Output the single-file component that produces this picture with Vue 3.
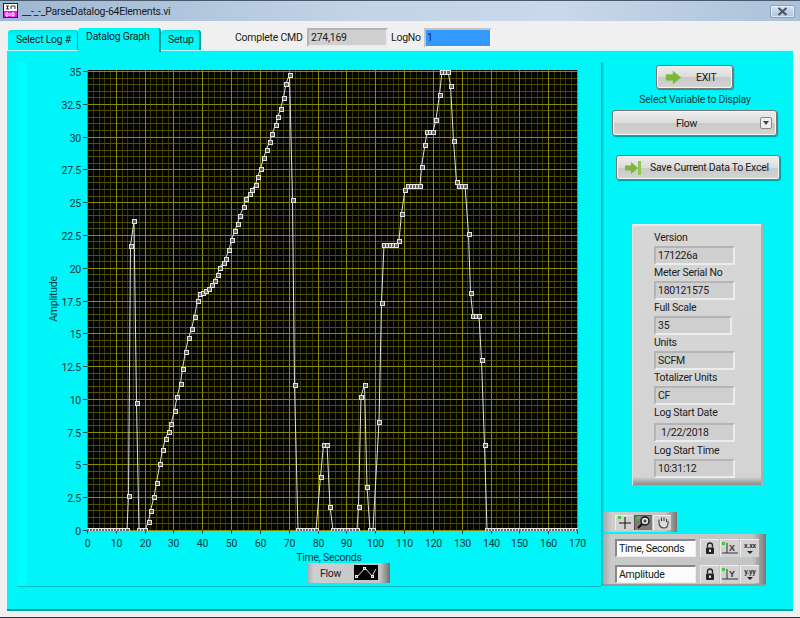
<script setup>
const plot = { l: 87, r: 578, t: 70, b: 530 }
const sx = (plot.r - plot.l - 1) / 170
const sy = (plot.b - plot.t - 1) / 35
const xPos = v => Math.round(plot.l + v * sx) + 0.5
const yPos = v => Math.round(plot.b - v * sy) + 0.5
const range = (n, f) => Array.from({ length: n }, (_, i) => f(i))

const xMinor = range(86, i => i * 2).filter(v => v % 10 !== 0)
const yMinor = range(71, i => i * 0.5).filter(v => v % 2.5 !== 0)
const xMajor = range(18, i => i * 10)
const yMajor = range(15, i => i * 2.5)

const flat = (a, b, y, s = 3) => {
  const out = []
  for (let x = a; x <= b; x += s) out.push([x, y])
  return out
}
const points = [
  ...flat(88, 127, 530),
  [128.5, 496], [130.5, 245.5], [134, 221], [136.5, 403],
  ...flat(139, 146, 530),
  [148.5, 521.5], [150.5, 510.5], [154, 497], [156.5, 482.5], [160, 463.5], [162.5, 450],
  [165.5, 438.5], [168.5, 431.5], [171, 424], [174.5, 410.5], [177, 397], [180.5, 383.5],
  [182.5, 368.5], [185.5, 351.5], [188.5, 338], [191.5, 329], [194.5, 316.5], [197.5, 300.5],
  [200, 294], [203, 293], [205.5, 291], [208.5, 288.5], [211.5, 285], [214.5, 281],
  [217.5, 274.5], [219.5, 267.5], [223.5, 262.5], [225.5, 258.5], [229, 250], [231.5, 239.5],
  [235, 230.5], [237.5, 223.5], [240, 215.5], [243.5, 207], [246, 199], [249.5, 194],
  [252, 189.5], [255.5, 184.5], [257.5, 177], [260.5, 169], [263.5, 158], [266.5, 149.5],
  [269.5, 141.5], [272, 134], [275.5, 125], [278, 116.5], [280.5, 108.5], [283.5, 97.5],
  [286, 83.5], [289.5, 74.5], [292.5, 199.5], [294.5, 384.5],
  ...flat(298, 318, 530),
  [320.5, 476.5], [323.5, 444.5], [327, 444.5], [330, 506.5],
  ...flat(333, 357, 530),
  [358.5, 506.5], [361, 396.5], [364.5, 384.5], [367, 486.5],
  ...flat(370, 375, 530),
  [379, 422], [381.5, 303],
  ...flat(384, 397, 245),
  [399, 240.5], [401.5, 213.5], [405, 189.5],
  ...flat(408, 420, 186),
  [421.5, 166.5], [425, 144.5],
  ...flat(427, 434, 132),
  [436, 119.5], [439.5, 94.5],
  ...flat(442, 448, 71.5),
  [450.5, 85.5], [453.5, 140.5], [456.5, 182],
  ...flat(459, 465, 185.5),
  [468.5, 233.5], [470.5, 293],
  ...flat(473, 479, 316),
  [481.5, 360], [484.5, 445],
  ...flat(487, 577, 530)
]
const line = points.map(p => p.join(',')).join(' ')
const markers = points.map(p => [Math.round(p[0] - 2) + 0.5, Math.round(p[1] - 2) + 0.5])

const fields = [
  { label: 'Version', value: '171226a' },
  { label: 'Meter Serial No', value: '180121575' },
  { label: 'Full Scale', value: '35', short: true },
  { label: 'Units', value: 'SCFM' },
  { label: 'Totalizer Units', value: 'CF' },
  { label: 'Log Start Date', value: '1/22/2018', indent: true, tall: true },
  { label: 'Log Start Time', value: '10:31:12' }
]
const scales = [
  { name: 'Time, Seconds', axis: 'X', fmt: 'x.xx' },
  { name: 'Amplitude', axis: 'Y', fmt: 'y.yy' }
]
</script>

<template>
  <div class="window">
    <header class="titlebar">
      <svg class="vi-icon" width="16" height="16" viewBox="0 0 16 16">
        <rect x="0.5" y="0.5" width="14" height="14" fill="#fff" stroke="#222" />
        <rect x="1" y="8" width="13" height="6" fill="#e81ee8" />
        <path d="M3 3h3M4.500 3v3M8 3h4M8 3v3M12 3v3M3 6h3" stroke="#333" fill="none" />
        <path d="M3 10h2v3H3zM7 10v3M9 10h2v3H9z" stroke="#fff" fill="none" />
      </svg>
      <span class="title">__-_-_ParseDatalog-64Elements.vi</span>
      <div class="close">
        <svg width="11" height="9" viewBox="0 0 11 9">
          <path d="M1.500 1l8 7M9.500 1l-8 7" stroke="#4a5564" stroke-width="2.200" fill="none" />
        </svg>
      </div>
    </header>

    <div class="toolbar">
      <nav class="tabs">
        <div class="tab">Select Log #</div>
        <div class="tab active">Datalog Graph</div>
        <div class="tab last">Setup</div>
      </nav>
      <div class="readouts">
        <span class="cmd-label">Complete CMD</span>
        <div class="inset cmd">274,169</div>
        <span class="log-label">LogNo</span>
        <div class="inset logno">1</div>
      </div>
    </div>

    <main class="panel">
      <section class="graph-pane">
        <svg class="graph" width="584" height="524" viewBox="17 62 584 524">
          <defs>
            <clipPath id="plotClip">
              <rect :x="plot.l" :y="plot.t" :width="plot.r - plot.l" :height="plot.b - plot.t + 1" />
            </clipPath>
            <linearGradient id="legendBg" x1="0" x2="1" y1="0" y2="0">
              <stop offset="0" stop-color="#a8a8a8" />
              <stop offset="0.08" stop-color="#cfcfcf" />
              <stop offset="0.88" stop-color="#c4c4c4" />
              <stop offset="1" stop-color="#6e6e6e" />
            </linearGradient>
          </defs>
          <g shape-rendering="crispEdges">
            <rect :x="plot.l" :y="plot.t" :width="plot.r - plot.l" :height="plot.b - plot.t" fill="#050500" />
            <line v-for="v in xMinor" :key="'xm' + v" :x1="xPos(v)" :x2="xPos(v)" :y1="plot.t" :y2="plot.b" class="minor" />
            <line v-for="v in yMinor" :key="'ym' + v" :y1="yPos(v)" :y2="yPos(v)" :x1="plot.l" :x2="plot.r" class="minor horizontal" />
            <line v-for="v in xMajor" :key="'xg' + v" :x1="xPos(v)" :x2="xPos(v)" :y1="plot.t" :y2="plot.b" class="major" />
            <line v-for="v in yMajor" :key="'yg' + v" :y1="yPos(v)" :y2="yPos(v)" :x1="plot.l" :x2="plot.r" class="major" />
            <line v-for="v in yMajor" :key="'yt' + v" :y1="yPos(v)" :y2="yPos(v)" x1="83" :x2="plot.l" class="tick" />
            <line v-for="v in xMajor" :key="'xt' + v" :x1="xPos(v)" :x2="xPos(v)" :y1="plot.b" :y2="plot.b + 4" class="tick" />
          </g>
          <g clip-path="url(#plotClip)">
            <polyline :points="line" class="trace" />
            <g shape-rendering="crispEdges">
              <rect v-for="(m, i) in markers" :key="i" :x="m[0]" :y="m[1]" width="4" height="4" class="marker" />
            </g>
          </g>
          <text v-for="v in yMajor" :key="'yl' + v" x="81" :y="yPos(v) + 4" text-anchor="end" class="axis">{{ v }}</text>
          <text v-for="v in xMajor" :key="'xl' + v" :x="xPos(v)" y="547" text-anchor="middle" class="axis">{{ v }}</text>
          <text x="329" y="561" text-anchor="middle" class="axis">Time, Seconds</text>
          <text transform="translate(57 299) rotate(-90)" text-anchor="middle" class="axis">Amplitude</text>

          <rect x="307" y="563" width="83" height="20" fill="url(#legendBg)" />
          <text x="320" y="577" class="axis dark">Flow</text>
          <rect x="354" y="565" width="24" height="15" fill="#000" />
          <polyline points="357,577 365,568 372,576 376,569" fill="none" stroke="#ddd" />
          <g fill="#555" stroke="#eee" shape-rendering="crispEdges">
            <rect x="355.500" y="575.500" width="2" height="2" />
            <rect x="363.500" y="567.500" width="2" height="2" />
            <rect x="371.500" y="575.500" width="2" height="2" />
          </g>
        </svg>
      </section>

      <aside class="side">
        <button class="silver exit">
          <svg width="17" height="15" viewBox="0 0 17 15">
            <path d="M1 4.500h7V1l8 6.500-8 6.500v-3.500H1z" fill="#7cb63a" stroke="#8cc850" stroke-width="0.500" />
          </svg>
          <span>EXIT</span>
        </button>
        <div class="select-label">Select Variable to Display</div>
        <div class="silver ring">
          <span>Flow</span>
          <div class="ring-arrow">
            <svg width="6" height="4" viewBox="0 0 6 4"><path d="M0 0h6L3 4z" fill="#444" /></svg>
          </div>
        </div>
        <button class="silver save">
          <svg width="18" height="16" viewBox="0 0 18 16">
            <path d="M1 5.500h6V2l7 6-7 6v-3.500H1z" fill="#7cb63a" />
            <rect x="14" y="1" width="3" height="14" fill="#8cc850" />
          </svg>
          <span>Save Current Data To Excel</span>
        </button>

        <div class="info">
          <div v-for="f in fields" :key="f.label" class="field" :class="{ tall: f.tall }">
            <div class="field-label">{{ f.label }}</div>
            <div class="inset field-value" :class="{ short: f.short, indent: f.indent }">{{ f.value }}</div>
          </div>
        </div>

        <div class="cursor-palette">
          <div class="tool">
            <svg width="16" height="15" viewBox="0 0 16 15">
              <path d="M8 2v12M2 8h12" stroke="#111" fill="none" />
              <rect x="1" y="1" width="3" height="3" fill="#43c843" />
            </svg>
          </div>
          <div class="tool pressed">
            <svg width="16" height="15" viewBox="0 0 16 15">
              <circle cx="9" cy="6" r="4" fill="#ddd" stroke="#111" stroke-width="1.400" />
              <path d="M6 9l-4 4" stroke="#111" stroke-width="2" />
              <path d="M7.500 6h3M9 4.500v3" stroke="#111" />
              <rect x="1" y="1" width="3" height="3" fill="#43c843" />
            </svg>
          </div>
          <div class="tool">
            <svg width="16" height="15" viewBox="0 0 16 15">
              <path d="M4 7V4.500M6.500 6V2.500M9 6V2.500M11.500 7V4M4 7c0 4 2 6 5 6s4-2 4-5V6" stroke="#444" stroke-width="1.100" fill="#ddd" />
            </svg>
          </div>
        </div>

        <div class="scale-legend">
          <div v-for="s in scales" :key="s.name" class="scale-row">
            <div class="scale-name">{{ s.name }}</div>
            <div class="tool small">
              <svg width="12" height="13" viewBox="0 0 12 13">
                <rect x="2" y="5.500" width="8" height="6.500" rx="1" fill="#222" />
                <path d="M3.500 5.500V3.500a2.500 2.500 0 0 1 5 0v2" stroke="#222" stroke-width="1.300" fill="none" />
                <rect x="5" y="7.500" width="2" height="2.500" fill="#ddd" />
              </svg>
            </div>
            <div class="tool small">
              <svg width="18" height="15" viewBox="0 0 18 15">
                <rect x="1" y="1" width="3" height="3" fill="#43c843" />
                <path d="M6 2v10H1M6 12h11" stroke="#333" fill="none" />
                <text x="8" y="10" class="glyph">{{ s.axis }}</text>
              </svg>
            </div>
            <div class="tool small fmt">
              <span>{{ s.fmt }}</span>
              <svg width="6" height="3" viewBox="0 0 6 3"><path d="M0 0h6L3 3z" fill="#222" /></svg>
            </div>
          </div>
        </div>
      </aside>
    </main>
  </div>
</template>

<style>
html, body { margin: 0; padding: 0; background: #f0f0f0; }
</style>

<style scoped>
.window {
  width: 800px;
  height: 618px;
  box-sizing: border-box;
  display: flex;
  flex-direction: column;
  overflow: hidden;
  background: #f0f0f0;
  border-top: 1px solid #4b5a6b;
  border-bottom: 1px solid #2b3a48;
  font-family: Roboto, "Noto Sans", sans-serif;
  font-size: 10.5px;
  letter-spacing: -0.25px;
  color: #202020;
  white-space: nowrap;
}
.titlebar {
  height: 20px;
  flex: none;
  display: flex;
  align-items: center;
  padding-left: 3px;
  background: linear-gradient(90deg, #9db7d3, #c3d4e7 45%, #c9d8ea 70%, #a9c1da);
}
.vi-icon { flex: none; }
.title { margin-left: 3px; color: #1a1a1a; }
.close {
  margin-left: auto;
  margin-right: 5px;
  width: 25px;
  height: 13px;
  box-sizing: border-box;
  display: flex;
  align-items: center;
  justify-content: center;
  border: 1px solid #8fa3ba;
  border-radius: 2px;
  background: linear-gradient(#d6e2f0, #b3c5da);
  box-shadow: inset 0 0 0 1px rgba(255, 255, 255, 0.5);
}
.toolbar {
  height: 29px;
  flex: none;
  display: flex;
  align-items: flex-end;
  padding-left: 8px;
  position: relative;
  z-index: 1;
}
.tabs { display: flex; align-items: flex-end; }
.tab {
  height: 20px;
  box-sizing: border-box;
  padding: 3px 0 0 8px;
  width: 70px;
  background: linear-gradient(#00e6e8, #00f8fa 30%);
  border-radius: 3px 3px 0 0;
  border-right: 1px solid #00a0a0;
}
.tab.active {
  height: 24px;
  width: 83px;
  margin-bottom: -2px;
  padding: 2px 0 0 8px;
  background: linear-gradient(#00f8fa, #00f4f6);
  border-right: 2px solid #009c9c;
}
.tab.last { width: 40px; padding-left: 7px; border-right: 2px solid #00a0a0; }
.readouts {
  display: flex;
  align-items: center;
  align-self: flex-start;
  margin-left: 34px;
  margin-top: 7px;
  height: 19px;
}
.cmd-label { width: 72px; }
.inset {
  box-sizing: border-box;
  background: #cfcfcf;
  border-style: solid;
  border-width: 2px;
  border-color: #b4b4b4 #ececec #ececec #b4b4b4;
  display: flex;
  align-items: center;
}
.cmd { width: 81px; height: 19px; padding-left: 2px; }
.log-label { margin-left: 3px; width: 33px; }
.logno {
  width: 68px;
  height: 20px;
  padding-left: 1px;
  background: #3399ff;
  border-color: #c4c4c4 #f5f5f5 #f5f5f5 #c4c4c4;
  color: #10305a;
}
.panel {
  flex: 1;
  margin: 0 7px 6px;
  min-height: 0;
  display: flex;
  box-sizing: border-box;
  padding-top: 11px;
  background: #00f5f8;
  border-top: 1px solid #c8f8f8;
  border-bottom: 2px solid #00a4a4;
}
.graph-pane {
  margin-left: 10px;
  width: 584px;
  height: 524px;
  flex: none;
  background: linear-gradient(90deg, #00fcff 10px, #00f5f8 10px);
  border-bottom: 1px solid #00b8b8;
}
.graph { display: block; }
.minor { stroke: #3a3a00; stroke-width: 1; }
.minor.horizontal { stroke: #505000; }
.major { stroke: #8a8a00; stroke-width: 1; }
.tick { stroke: #204040; stroke-width: 1; }
.trace { fill: none; stroke: #e0e0e0; stroke-width: 1; }
.marker { fill: #666; stroke: #e4e4e4; stroke-width: 1; }
.axis { font-family: Roboto, "Noto Sans", sans-serif; font-size: 10.5px; letter-spacing: -0.25px; fill: #063a40; }
.axis.dark { fill: #222; }
.side {
  flex: 1;
  min-width: 0;
  height: 524px;
  display: flex;
  flex-direction: column;
  align-items: flex-start;
  background: linear-gradient(90deg, #00b0b0, #00d8d8 2px, #00f5f8 3px);
}
.silver {
  box-sizing: border-box;
  display: flex;
  align-items: center;
  font: inherit;
  letter-spacing: inherit;
  color: #202020;
  padding: 0;
  border: 1px solid #777;
  border-radius: 3px;
  background: linear-gradient(#ededed, #dcdcdc 50%, #c9c9c9 52%, #d4d4d4);
  box-shadow: inset 0 0 0 1px #f4f4f4, 1px 1px 1px rgba(0, 70, 70, 0.5);
}
.exit {
  width: 77px;
  height: 24px;
  margin: 3px 0 0 55px;
  padding-left: 8px;
}
.exit span { margin-left: 14px; }
.select-label { margin: 3px 0 0 0; width: 188px; text-align: center; height: 15px; line-height: 15px; color: #063a40; }
.ring {
  width: 165px;
  height: 26px;
  margin: 3px 0 0 11px;
  position: relative;
}
.ring span { margin-left: 63px; }
.ring-arrow {
  position: absolute;
  right: 4px;
  top: 6px;
  width: 12px;
  height: 12px;
  box-sizing: border-box;
  border: 1px solid #888;
  border-radius: 2px;
  background: #efefef;
  display: flex;
  align-items: center;
  justify-content: center;
}
.save {
  width: 164px;
  height: 25px;
  margin: 19px 0 0 15px;
  padding-left: 7px;
}
.save span { margin-left: 8px; }
.info {
  width: 131px;
  height: 261px;
  margin: 44px 0 0 31px;
  padding: 6px 0 0 21px;
  box-sizing: border-box;
  background: linear-gradient(#f2f2f2, #d6d6d6 3px, #d4d4d4 calc(100% - 8px), #8a8a8a);
  border-right: 2px solid #b0b0b0;
  border-left: 1px solid #e8e8e8;
}
.field { height: 35px; }
.field.tall { height: 37.5px; }
.field-label { height: 16px; line-height: 15px; }
.field-value { width: 81px; height: 19px; padding-left: 2px; }
.tall .field-label { height: 18px; }
.field-value.short { width: 78px; }
.field-value.indent { padding-left: 5px; }
.cursor-palette {
  margin: auto 0 0 2px;
  width: 74px;
  height: 20px;
  box-sizing: border-box;
  display: flex;
  align-items: center;
  gap: 1px;
  padding-left: 12px;
  background: linear-gradient(90deg, #a8a8a8, #cecece 12%, #c4c4c4 84%, #777);
}
.tool {
  width: 17px;
  flex: none;
  display: flex;
  align-items: center;
  justify-content: center;
  background: #d2d2d2;
  border-top: 1px solid #eee;
  border-left: 1px solid #eee;
  height: 14px;
}
.tool.pressed { background: #7c7c7c; border-color: #555; }
.scale-legend {
  margin: 2px 0 0 2px;
  width: 163px;
  height: 52px;
  box-sizing: border-box;
  padding: 5px 0 0 12px;
  display: flex;
  flex-direction: column;
  gap: 8px;
  background: linear-gradient(90deg, #a8a8a8, #cacaca 5%, #c4c4c4 92%, #777);
  border-bottom: 2px solid #999;
}
.scale-row { display: flex; align-items: center; gap: 1px; height: 18px; }
.scale-name {
  width: 81px;
  height: 18px;
  box-sizing: border-box;
  padding-left: 2px;
  margin-right: 3px;
  background: #fbfbfb;
  border-style: solid;
  border-width: 2px 1px 1px 2px;
  border-color: #888 #eee #eee #888;
  display: flex;
  align-items: center;
  color: #102020;
}
.tool.small { width: 18px; height: 17px; }
.tool.small.fmt { flex-direction: column; gap: 1px; }
.fmt span { font-size: 7px; line-height: 7px; font-weight: 700; color: #333; letter-spacing: -0.2px; }
.glyph { font-family: "Liberation Sans", sans-serif; font-size: 9px; font-weight: 700; fill: #333; }
</style>
